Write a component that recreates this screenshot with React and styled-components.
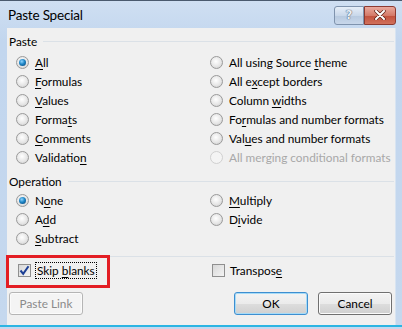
import React from "react";
import styled, { createGlobalStyle } from "styled-components";

const GlobalStyle = createGlobalStyle`
  html, body {
    margin: 0;
    padding: 0;
    background: #ffffff;
  }
  body {
    font-family: "Lato", "Noto Sans", sans-serif;
    font-size: 11.8px;
    color: #000;
  }
`;

const pasteLeft = [
  { label: "All", key: 0, checked: true },
  { label: "Formulas", key: 0 },
  { label: "Values", key: 0 },
  { label: "Formats", key: 5 },
  { label: "Comments", key: 0 },
  { label: "Validation", key: 9 },
];

const pasteRight = [
  { label: "All using Source theme", key: 17 },
  { label: "All except borders", key: 5 },
  { label: "Column widths", key: 7 },
  { label: "Formulas and number formats", key: 2 },
  { label: "Values and number formats", key: 3 },
  { label: "All merging conditional formats", disabled: true },
];

const opLeft = [
  { label: "None", key: 1, checked: true },
  { label: "Add", key: 1 },
  { label: "Subtract", key: 0 },
];

const opRight = [
  { label: "Multiply", key: 0 },
  { label: "Divide", key: 1 },
];

const Window = styled.div`
  width: 402px;
  height: 329px;
  box-sizing: border-box;
  border-top: 1px solid #4a5a6e;
  background: linear-gradient(#cfdff2, #c2d6ee 40px, #c5d8ee);
  display: flex;
  flex-direction: column;
  overflow: hidden;
  position: relative;
`;

const TitleBar = styled.div`
  height: 27px;
  flex-shrink: 0;
  display: flex;
  align-items: center;
  padding: 0 6px 0 8px;
`;

const Title = styled.div`
  flex: 1;
  font-family: "Lato", sans-serif;
  font-size: 13.5px;
  letter-spacing: -0.2px;
  color: #000;
`;

const CaptionButton = styled.div`
  width: ${(p) => p.$w}px;
  height: 19px;
  box-sizing: border-box;
  display: flex;
  align-items: center;
  justify-content: center;
  border: 1px solid ${(p) => (p.$close ? "#8d3a30" : "#7f93ad")};
  border-radius: ${(p) => (p.$close ? "0 3px 3px 0" : "3px 0 0 3px")};
  background: ${(p) =>
    p.$close
      ? "linear-gradient(#e9a99c, #d47a69 50%, #c1503c 51%, #d1715c)"
      : "linear-gradient(#e6eef8, #c9d8ea 50%, #b7c9df 51%, #c8d7ea)"};
  margin-top: 1px;
`;

const HelpMark = styled.span`
  font-family: "DejaVu Sans", sans-serif;
  color: #e8eef6;
  font-size: 12px;
  font-weight: bold;
  text-shadow: 0 0 1px #45566e, 0 0 1px #45566e;
`;

const Body = styled.div`
  margin: 0 6px 0 7px;
  background: #f0f0f0;
  display: flex;
  flex-direction: column;
  padding: 5px 1px 10px 2px;
  border-right: 1px solid #d8e4f1;
`;

const GroupHeader = styled.div`
  display: flex;
  align-items: center;
  gap: 6px;
  height: 16px;
  margin-top: ${(p) => p.$mt || 0}px;
  margin-bottom: ${(p) => p.$mb}px;
  &::after {
    content: "";
    flex: 1;
    height: 1px;
    background: #dbe1e7;
  }
`;

const OptionGrid = styled.div`
  display: grid;
  grid-template-columns: 194px 1fr;
  grid-auto-flow: column;
  grid-template-rows: repeat(${(p) => p.$rows}, 19px);
  padding-left: 7px;
`;

const OptionRow = styled.label`
  display: flex;
  align-items: center;
  gap: 6px;
  height: 19px;
  white-space: nowrap;
  color: ${(p) => (p.$disabled ? "#a8a8a8" : "#000")};
`;

const Radio = styled.span`
  width: 13px;
  height: 13px;
  box-sizing: border-box;
  border-radius: 50%;
  border: 1px solid ${(p) => (p.$disabled ? "#d0d0d0" : "#9a9a9a")};
  background: ${(p) =>
    p.$disabled
      ? "#f4f4f4"
      : "radial-gradient(circle at 45% 40%, #ffffff 0%, #e6e6e6 55%, #c8c8c8 100%)"};
  display: flex;
  align-items: center;
  justify-content: center;
  flex-shrink: 0;
  &::after {
    content: "";
    display: ${(p) => (p.$checked ? "block" : "none")};
    width: 7px;
    height: 7px;
    border-radius: 50%;
    background: radial-gradient(circle at 40% 35%, #8fd4ff 0%, #1d86c6 45%, #0a3c6e 100%);
  }
`;

const Key = styled.span`
  text-decoration: underline;
  text-underline-offset: 2px;
`;

const Separator = styled.div`
  height: 1px;
  background: #dbe1e7;
  margin: 8px 0 0 0;
`;

const CheckRowWrap = styled.div`
  display: grid;
  grid-template-columns: 194px 1fr;
  padding-left: 9px;
  height: 27px;
  align-items: center;
`;

const CheckRow = styled.label`
  display: flex;
  align-items: center;
  gap: 5px;
  white-space: nowrap;
`;

const Box = styled.span`
  width: 13px;
  height: 13px;
  box-sizing: border-box;
  border: 1px solid #8f8f8f;
  background: linear-gradient(135deg, #d8d8d8, #f4f4f4);
  display: flex;
  align-items: center;
  justify-content: center;
  flex-shrink: 0;
`;

const FocusText = styled.span`
  outline: 1px dotted #000;
  padding: 0 1px;
`;

const ButtonRow = styled.div`
  display: flex;
  align-items: center;
  margin-top: 8px;
`;

const Button = styled.div`
  width: 74px;
  height: 23px;
  box-sizing: border-box;
  border-radius: 3px;
  display: flex;
  align-items: center;
  justify-content: center;
  margin-left: ${(p) => p.$ml || 0}px;
  border: 1px solid
    ${(p) => (p.$disabled ? "#b5b5b5" : p.$default ? "#3d8ed0" : "#707070")};
  color: ${(p) => (p.$disabled ? "#8a8a8a" : "#000")};
  background: ${(p) =>
    p.$disabled
      ? "#f4f4f4"
      : "linear-gradient(#f3f3f3, #ebebeb 50%, #dddddd 51%, #d0d0d0)"};
  box-shadow: ${(p) => (p.$default ? "inset 0 0 0 1px #a6dbf7" : "inset 0 0 0 1px #fbfbfb")};
`;

const BottomEdge = styled.div`
  height: 2px;
  flex-shrink: 0;
  background: #2bb5e3;
`;

const Highlight = styled.div`
  position: absolute;
  left: 6px;
  top: 254px;
  width: 104px;
  height: 33px;
  box-sizing: border-box;
  border: 3px solid #e31e24;
  pointer-events: none;
`;

function Label({ text, k }) {
  if (k === undefined) return text;
  return (
    <>
      {text.slice(0, k)}
      <Key>{text[k]}</Key>
      {text.slice(k + 1)}
    </>
  );
}

function Options({ left, right }) {
  const renderOpt = (o) => (
    <OptionRow key={o.label} $disabled={o.disabled}>
      <Radio $checked={o.checked} $disabled={o.disabled} />
      <span>
        <Label text={o.label} k={o.key} />
      </span>
    </OptionRow>
  );
  return (
    <OptionGrid $rows={left.length}>
      {left.map(renderOpt)}
      {right.map(renderOpt)}
    </OptionGrid>
  );
}

export default function App() {
  return (
    <>
      <GlobalStyle />
      <Window>
        <TitleBar>
          <Title>Paste Special</Title>
          <CaptionButton $w={30}>
            <HelpMark>?</HelpMark>
          </CaptionButton>
          <CaptionButton $w={32} $close>
            <svg width="12" height="10" viewBox="0 0 12 10">
              <path
                d="M2 1 L10 9 M10 1 L2 9"
                stroke="#5a2018"
                strokeWidth="3.4"
                strokeLinecap="round"
              />
              <path
                d="M2 1 L10 9 M10 1 L2 9"
                stroke="#ffffff"
                strokeWidth="2"
                strokeLinecap="round"
              />
            </svg>
          </CaptionButton>
        </TitleBar>
        <Body>
          <GroupHeader $mb={4}>Paste</GroupHeader>
          <Options left={pasteLeft} right={pasteRight} />
          <GroupHeader $mt={6} $mb={2}>
            Operation
          </GroupHeader>
          <Options left={opLeft} right={opRight} />
          <Separator />
          <CheckRowWrap>
            <CheckRow>
              <Box>
                <svg width="11" height="11" viewBox="0 0 11 11">
                  <path
                    d="M1.5 5.5 L4.2 8.8 L9.5 1.2"
                    fill="none"
                    stroke="#1c3f95"
                    strokeWidth="2"
                  />
                </svg>
              </Box>
              <FocusText>
                Skip <Key>b</Key>lanks
              </FocusText>
            </CheckRow>
            <CheckRow>
              <Box />
              <span>
                Transpos<Key>e</Key>
              </span>
            </CheckRow>
          </CheckRowWrap>
          <ButtonRow>
            <Button $disabled>Paste Link</Button>
            <Button $default $ml={151}>
              OK
            </Button>
            <Button $ml={10}>Cancel</Button>
          </ButtonRow>
        </Body>
        <BottomEdge />
        <Highlight />
      </Window>
    </>
  );
}
